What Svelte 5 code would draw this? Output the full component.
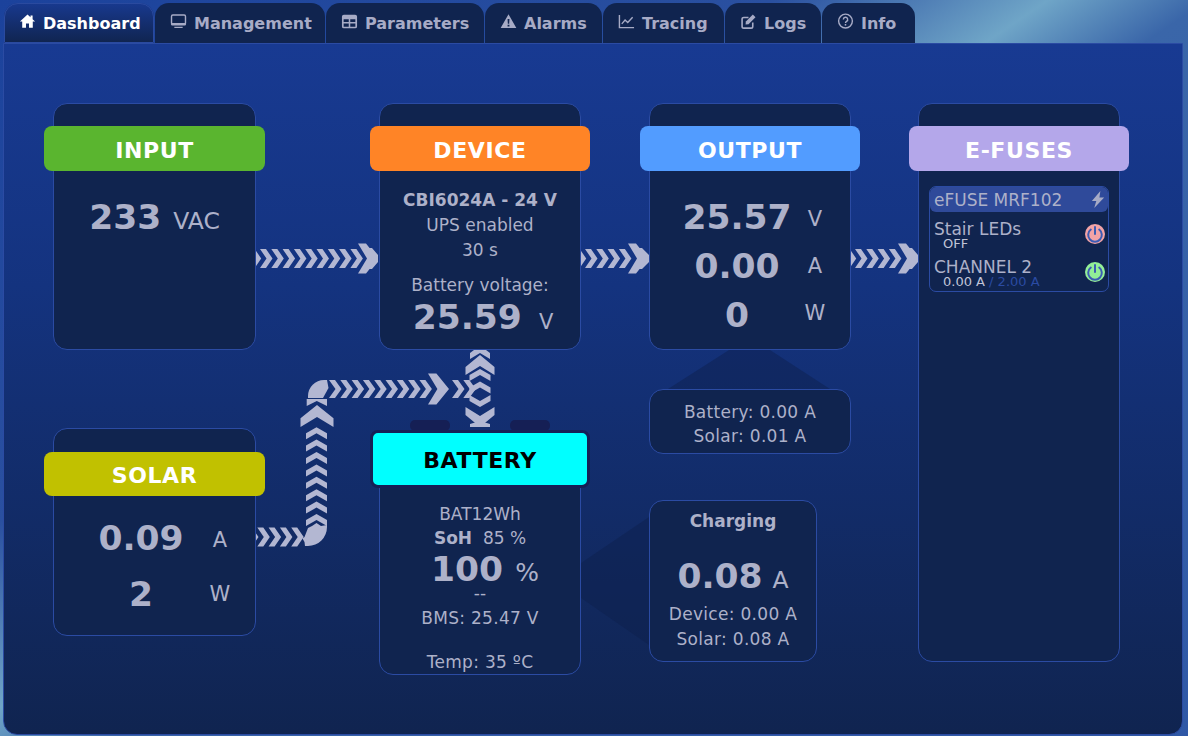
<script>
  const tabs = [
    { label: 'Dashboard', icon: 'home', active: true, w: 150 },
    { label: 'Management', icon: 'desktop', w: 170 },
    { label: 'Parameters', icon: 'table', w: 158 },
    { label: 'Alarms', icon: 'warn', w: 117 },
    { label: 'Tracing', icon: 'chart', w: 121 },
    { label: 'Logs', icon: 'edit', w: 96 },
    { label: 'Info', icon: 'help', w: 93 }
  ];

  // One chevron pointing along +x, with its tail at x and axis on y.
  const chevron = (x, y, h, w = 12.5, t = 6) => {
    const s = h / 2;
    return [[x, y - s], [x + t, y - s], [x + w, y], [x + t, y + s], [x, y + s], [x + w - t, y]];
  };
  const rot = (pts, cx, cy, deg) => {
    const r = (deg * Math.PI) / 180;
    return pts.map(([x, y]) => {
      const dx = x - cx, dy = y - cy;
      return [cx + dx * Math.cos(r) - dy * Math.sin(r), cy + dx * Math.sin(r) + dy * Math.cos(r)];
    });
  };
  const str = (pts) => pts.map((p) => p.map((n) => n.toFixed(1)).join(',')).join(' ');

  const row = (x0, x1, y, h = 19) => {
    const out = [];
    for (let x = x0; x < x1; x += 11.3) out.push(str(chevron(x, y, h)));
    return out;
  };
  const col = (y0, y1, x, dir = -90) => {
    const out = [];
    const step = 12.4;
    for (let y = y0; y1 > y0 ? y < y1 : y > y1; y += y1 > y0 ? step : -step) {
      out.push(str(rot(chevron(x - 6, y, 21, 12, 6), x, y, dir)));
    }
    return out;
  };
  const big = (x, y, h, w) => [[x, y - h / 2], [x + w * 0.4, y - h / 2], [x + w, y], [x + w * 0.4, y + h / 2], [x, y + h / 2], [x + w * 0.45, y]];

  const chevrons = [
    ...row(248.7, 352, 258.5), ...row(573.7, 622, 258.5), ...row(843.7, 892, 258.5),
    ...row(246, 300, 537), ...col(520, 432, 316.5), ...row(329, 422, 389, 18),
    ...row(452, 468, 389, 18), ...col(375, 389, 480), ...col(401, 389, 480, 90)
  ];
  const bigs = [
    str(big(358, 258.5, 30, 20)), str(big(628, 258.5, 30, 20)), str(big(898, 258.5, 30, 20)),
    str(big(428, 389, 31, 21)),
    str(rot(big(306, 416, 33, 22), 317, 416, -90)),
    str(rot(big(470, 365, 29, 20), 480, 365, -90)),
    str(rot(big(470, 417, 29, 20), 480, 417, 90))
  ];
</script>

{#snippet icon(name)}
  <svg class="ico" viewBox="0 0 18 18" aria-hidden="true">
    {#if name === 'home'}
      <path class="fill" d="M9 1.6 1 9h2.4v6.6h4v-4.4h3.2v4.4h4V9H17L14.4 6.6V2.6h-2.2v2z" />
    {:else if name === 'desktop'}
      <rect class="line" x="1.6" y="2.2" width="14.8" height="9.6" rx="1.4" />
      <path class="fill" d="M1 10.6h16v1.2a1.4 1.4 0 0 1-1.4 1.4H2.4A1.4 1.4 0 0 1 1 11.8zM4.6 14.6h8.8v1.3H4.6z" />
    {:else if name === 'table'}
      <path class="fill" fill-rule="evenodd" d="M3 1.8h12A2 2 0 0 1 17 3.8v10.4a2 2 0 0 1-2 2H3a2 2 0 0 1-2-2V3.8a2 2 0 0 1 2-2zM2.8 6.6v3h5.4v-3zm7 0v3h5.4v-3zm-7 4.6v3.3h5.4v-3.3zm7 0v3.3h5.4v-3.3z" />
    {:else if name === 'warn'}
      <path class="fill" fill-rule="evenodd" d="M9 1.3 17.3 16H.7zM8 6.3l.3 5h1.4l.3-5zM8 12.4v1.8h2v-1.8z" />
    {:else if name === 'chart'}
      <path class="line" d="M1.5 2v13.5H17" />
      <path class="line" d="M4 11.5l3.5-4 2.8 2.5L15.5 4.5" />
    {:else if name === 'edit'}
      <path class="line lw2" d="M13.5 10v4.2a1.8 1.8 0 0 1-1.8 1.8H4a1.8 1.8 0 0 1-1.8-1.8V6.5A1.8 1.8 0 0 1 4 4.7h5" />
      <path class="fill" d="M13.6 1.6 16.4 4.4 9 11.8 5.9 12.1 6.2 9z" />
    {:else}
      <circle class="line" cx="9" cy="8.5" r="7.3" />
      <path class="line" d="M6.7 6.8a2.3 2.3 0 1 1 3.4 2c-.8.5-1.1.9-1.1 1.7" />
      <rect class="fill" x="8.2" y="11.6" width="1.6" height="1.7" />
    {/if}
  </svg>
{/snippet}

{#snippet power(cls)}
  <svg class="power {cls}" viewBox="0 0 20 20" aria-hidden="true">
    <circle class="disc" cx="10" cy="10" r="10" />
    <path class="pw" d="M5.8 5.5a6.8 6.8 0 1 0 8.4 0M10 3v7" />
  </svg>
{/snippet}

<nav class="tabs">
  {#each tabs as t}
    <div class="tab" class:active={t.active} style="width:{t.w}px">
      {@render icon(t.icon)}
      <span>{t.label}</span>
    </div>
  {/each}
</nav>

<main class="panel">
  <svg class="flows" viewBox="4 44 1178 690" aria-hidden="true">
    <polygon class="shade" points="729,350 770,350 830,389 668,389" />
    <polygon class="shade" points="581,563 649,517 649,645 581,598" />
    {#each chevrons as p}<polygon class="arrow" points={p} />{/each}
    {#each bigs as p}<polygon class="arrow" points={p} />{/each}
    <path class="arrow" d="M364 248h8l6 7v7l-6 7h-8l8-10.5zM634 248h8l7 7v7l-7 7h-8l8-10.5zM904 248h8l6 7v7l-6 7h-8l8-10.5z" />
    <path class="arrow" d="M305 546h3a19 19 0 0 0 19-19v-2l-6 1-4.5-3-4.5 3-4 2-3.5 9-2 1.5 2 3.5z" />
    <path class="arrow" d="M308 398v-2a16 16 0 0 1 16-16h3l1.5 8-5.5 10z" />
    <polygon class="arrow" points="306.7,399 327,399 327,406 316.8,401 306.7,406" />
    <polygon class="arrow" points="474,350 486,350 490,353 490,359 480,353 470,359 470,353" />
    <polygon class="arrow" points="470,424 480,421 490,424 490,427 470,427" />
    <rect class="term" x="410" y="420" width="40" height="11" rx="5" />
    <rect class="term" x="510" y="420" width="40" height="11" rx="5" />
  </svg>

  <section class="card input">
    <h2 class="head" style="background:#5ab52f">INPUT</h2>
    <div class="single"><b class="num">233</b><span class="unit">VAC</span></div>
  </section>

  <section class="card device">
    <h2 class="head" style="background:#ff8426">DEVICE</h2>
    <div class="text dev">
      <p><b>CBI6024A - 24 V</b></p>
      <p>UPS enabled</p>
      <p>30 s</p>
      <p class="gap">Battery voltage:</p>
      <p class="single tight"><b class="num">25.59</b><span class="unit small">V</span></p>
    </div>
  </section>

  <section class="card output">
    <h2 class="head" style="background:#529cff">OUTPUT</h2>
    <div class="vals out">
      <b class="num">25.57</b><span class="u dn">V</span>
      <b class="num">0.00</b><span class="u">A</span>
      <b class="num">0</b><span class="u up">W</span>
    </div>
  </section>

  <section class="card fuses">
    <h2 class="head" style="background:#b4a7ea">E-FUSES</h2>
    <div class="fusebox">
      <div class="fusehead">
        <span>eFUSE MRF102</span>
        <svg class="bolt" viewBox="0 0 14 18" aria-hidden="true"><path d="M9.5 0 .5 10.5h4.700L3 18l10.500-11H8.500z" /></svg>
      </div>
      <div class="fuse">
        <div><div class="fname">Stair LEDs</div><div class="fsub">OFF</div></div>
        {@render power('off')}
      </div>
      <div class="fuse">
        <div><div class="fname">CHANNEL 2</div><div class="fsub">0.00 A <span class="dim">/ 2.00 A</span></div></div>
        {@render power('on')}
      </div>
    </div>
  </section>

  <section class="card sub wide">
    <p>Battery: 0.00 A</p>
    <p>Solar: 0.01 A</p>
  </section>

  <section class="card solar">
    <h2 class="head sh" style="background:#c1c100">SOLAR</h2>
    <div class="vals sol">
      <b class="num">0.09</b><span class="u dn">A</span>
      <b class="num">2</b><span class="u">W</span>
    </div>
  </section>

  <section class="card battery">
    <h2 class="head bat">BATTERY</h2>
    <div class="text batt">
      <p>BAT12Wh</p>
      <p><b>SoH</b>&nbsp; 85 %</p>
      <p class="pct"><b class="num">100</b><span class="unit">%</span></p>
      <p class="dash">--</p>
      <p class="wide">BMS: 25.47 V</p>
      <p class="temp wide">Temp: 35 ºC</p>
    </div>
  </section>

  <section class="card charging">
    <p class="ctitle"><b>Charging</b></p>
    <p class="single cval"><b class="num">0.08</b><span class="unit">A</span></p>
    <p class="wide">Device: 0.00 A</p>
    <p class="wide">Solar: 0.08 A</p>
  </section>
</main>

<style>
  :global(body) {
    margin: 0;
    width: 1188px;
    height: 736px;
    overflow: hidden;
    font-family: "DejaVu Sans", sans-serif;
    background: linear-gradient(146deg, #1b429c 0%, #2a50a0 34%, #6fa5c7 46%, #3a66a9 53%, #2f58a6 100%);
  }
  :global(#app) { height: 736px; }
  p { margin: 0; }

  .tabs {
    display: flex;
    gap: 1px;
    height: 39px;
    padding: 3px 0 0 4px;
    margin-bottom: 1px;
  }
  .tab {
    display: flex;
    align-items: center;
    gap: 7px;
    padding-left: 15px;
    box-sizing: border-box;
    height: 40px;
    white-space: nowrap;
    border-radius: 14px 14px 0 0;
    background: #10244f;
    color: #a7abc6;
    font-size: 16px;
    font-weight: 700;
  }
  .tab.active {
    color: #fff;
    background: linear-gradient(#18398f, #10244f);
    outline: 1px solid #2a4a9f;
    outline-offset: -1px;
    position: relative;
  }
  .ico { width: 17px; height: 17px; flex: none; margin-top: -4px; }
  .fill { fill: currentColor; }
  .line { fill: none; stroke: currentColor; stroke-width: 1.5; }
  .lw2 { stroke-width: 1.7; }

  .panel {
    position: relative;
    box-sizing: border-box;
    width: 1180px;
    height: 692px;
    margin-left: 3px;
    border: 1px solid #2b4ba3;
    border-radius: 0 0 14px 14px;
    background: linear-gradient(#183a92 0%, #14337f 35%, #102450 100%);
  }
  .flows { position: absolute; left: 0; top: 0; width: 1178px; height: 690px; }
  .shade { fill: #0d1f4c; opacity: .45; }
  .arrow { fill: #b3b7d2; }
  .term { fill: #151f55; }

  .card {
    position: absolute;
    box-sizing: border-box;
    background: #10244f;
    border: 1px solid #2b4ba3;
    border-radius: 14px;
    color: #adb1c9;
    font-size: 17px;
    text-align: center;
    padding-top: 22px;
  }
  .wide { letter-spacing: .3px; }
  .input { left: 49px; top: 59px; width: 203px; height: 247px; }
  .device { left: 375px; top: 59px; width: 202px; height: 247px; }
  .output { left: 645px; top: 59px; width: 202px; height: 247px; }
  .fuses { left: 914px; top: 59px; width: 202px; height: 559px; }
  .sub { left: 645px; top: 345px; width: 202px; height: 65px; padding-top: 10px; line-height: 24px; }
  .solar { left: 49px; top: 384px; width: 203px; height: 208px; padding-top: 23px; }
  .battery { left: 375px; top: 386px; width: 202px; height: 245px; padding-top: 0; }
  .charging { left: 645px; top: 456px; width: 168px; height: 162px; padding-top: 8px; line-height: 25px; }

  .head {
    margin: 0 -10px;
    height: 45px;
    line-height: 49px;
    border-radius: 8px;
    color: #fff;
    font-size: 22px;
    font-weight: 700;
    letter-spacing: .6px;
    text-align: center;
  }
  .head.sh { height: 44px; line-height: 47px; }
  .head.bat {
    box-sizing: border-box;
    margin: -1px -10px 0;
    height: 58px;
    line-height: 55px;
    background: #00ffff;
    color: #000;
    border: 3px solid #151f55;
    border-radius: 8px;
  }
  .num { font-size: 34.5px; font-weight: 700; line-height: 1; }
  .unit { font-size: 23.5px; margin-left: 12px; }
  .unit.small { font-size: 21px; margin-left: 17px; }
  .single { display: flex; justify-content: center; align-items: baseline; }
  .input .single { margin-top: 29px; }
  .text { line-height: 25px; }
  .dev { margin-top: 17px; }
  .gap { margin-top: 10px; }
  .tight { margin-top: 2px; line-height: 36px; padding-left: 6px; }
  .vals { display: grid; justify-items: center; align-items: center; }
  .out { grid-template-columns: 114px 42px; padding: 29px 0 0 30px; row-gap: 15px; }
  .out .num, .sol .num { line-height: 34px; }
  .sol { grid-template-columns: 90px 44px; column-gap: 12px; padding: 25px 0 0 42px; row-gap: 22px; }
  .u { font-size: 21px; }
  .u.dn { margin-top: 4px; }
  .u.up { margin-top: -4px; }

  .batt { padding-top: 14px; }
  .batt p { line-height: 24px; }
  .batt .pct { line-height: 36px; margin-top: 2px; padding-left: 10px; display: flex; justify-content: center; align-items: baseline; }
  .batt .pct .unit { margin-left: 12px; font-size: 25px; }
  .batt .dash { line-height: 12px; margin-top: -4px; margin-bottom: 7px; }
  .batt .temp { margin-top: 20px; }

  .ctitle { margin-bottom: 21px; }
  .cval { line-height: 50px; margin-bottom: -3px; }
  .cval .unit { margin-left: 10px; }

  .fusebox {
    margin: 15px 10px 0;
    border: 1px solid #2b4ba3;
    border-radius: 7px;
    height: 106px;
    box-sizing: border-box;
    text-align: left;
  }
  .fusehead {
    display: flex;
    justify-content: space-between;
    align-items: center;
    height: 25px;
    padding: 0 3px 0 4px;
    background: #2f4a9a;
    border-radius: 6px;
  }
  .bolt { width: 14px; height: 17px; fill: #a7abc6; }
  .fuse {
    display: flex;
    justify-content: space-between;
    align-items: center;
    height: 38px;
    padding: 0 3px 0 4px;
  }
  .fname { line-height: 18px; padding-top: 7px; }
  .fsub { font-size: 13px; line-height: 12px; padding-left: 9px; color: #c0c4d8; }
  .dim { color: #2b4ba3; }
  .power { width: 20px; height: 20px; margin-top: 5px; }
  .off .disc { fill: #f3a3a6; }
  .on .disc { fill: #93ef97; }
  .pw { fill: none; stroke: #3c5cb4; stroke-width: 2; stroke-linecap: round; }
</style>
